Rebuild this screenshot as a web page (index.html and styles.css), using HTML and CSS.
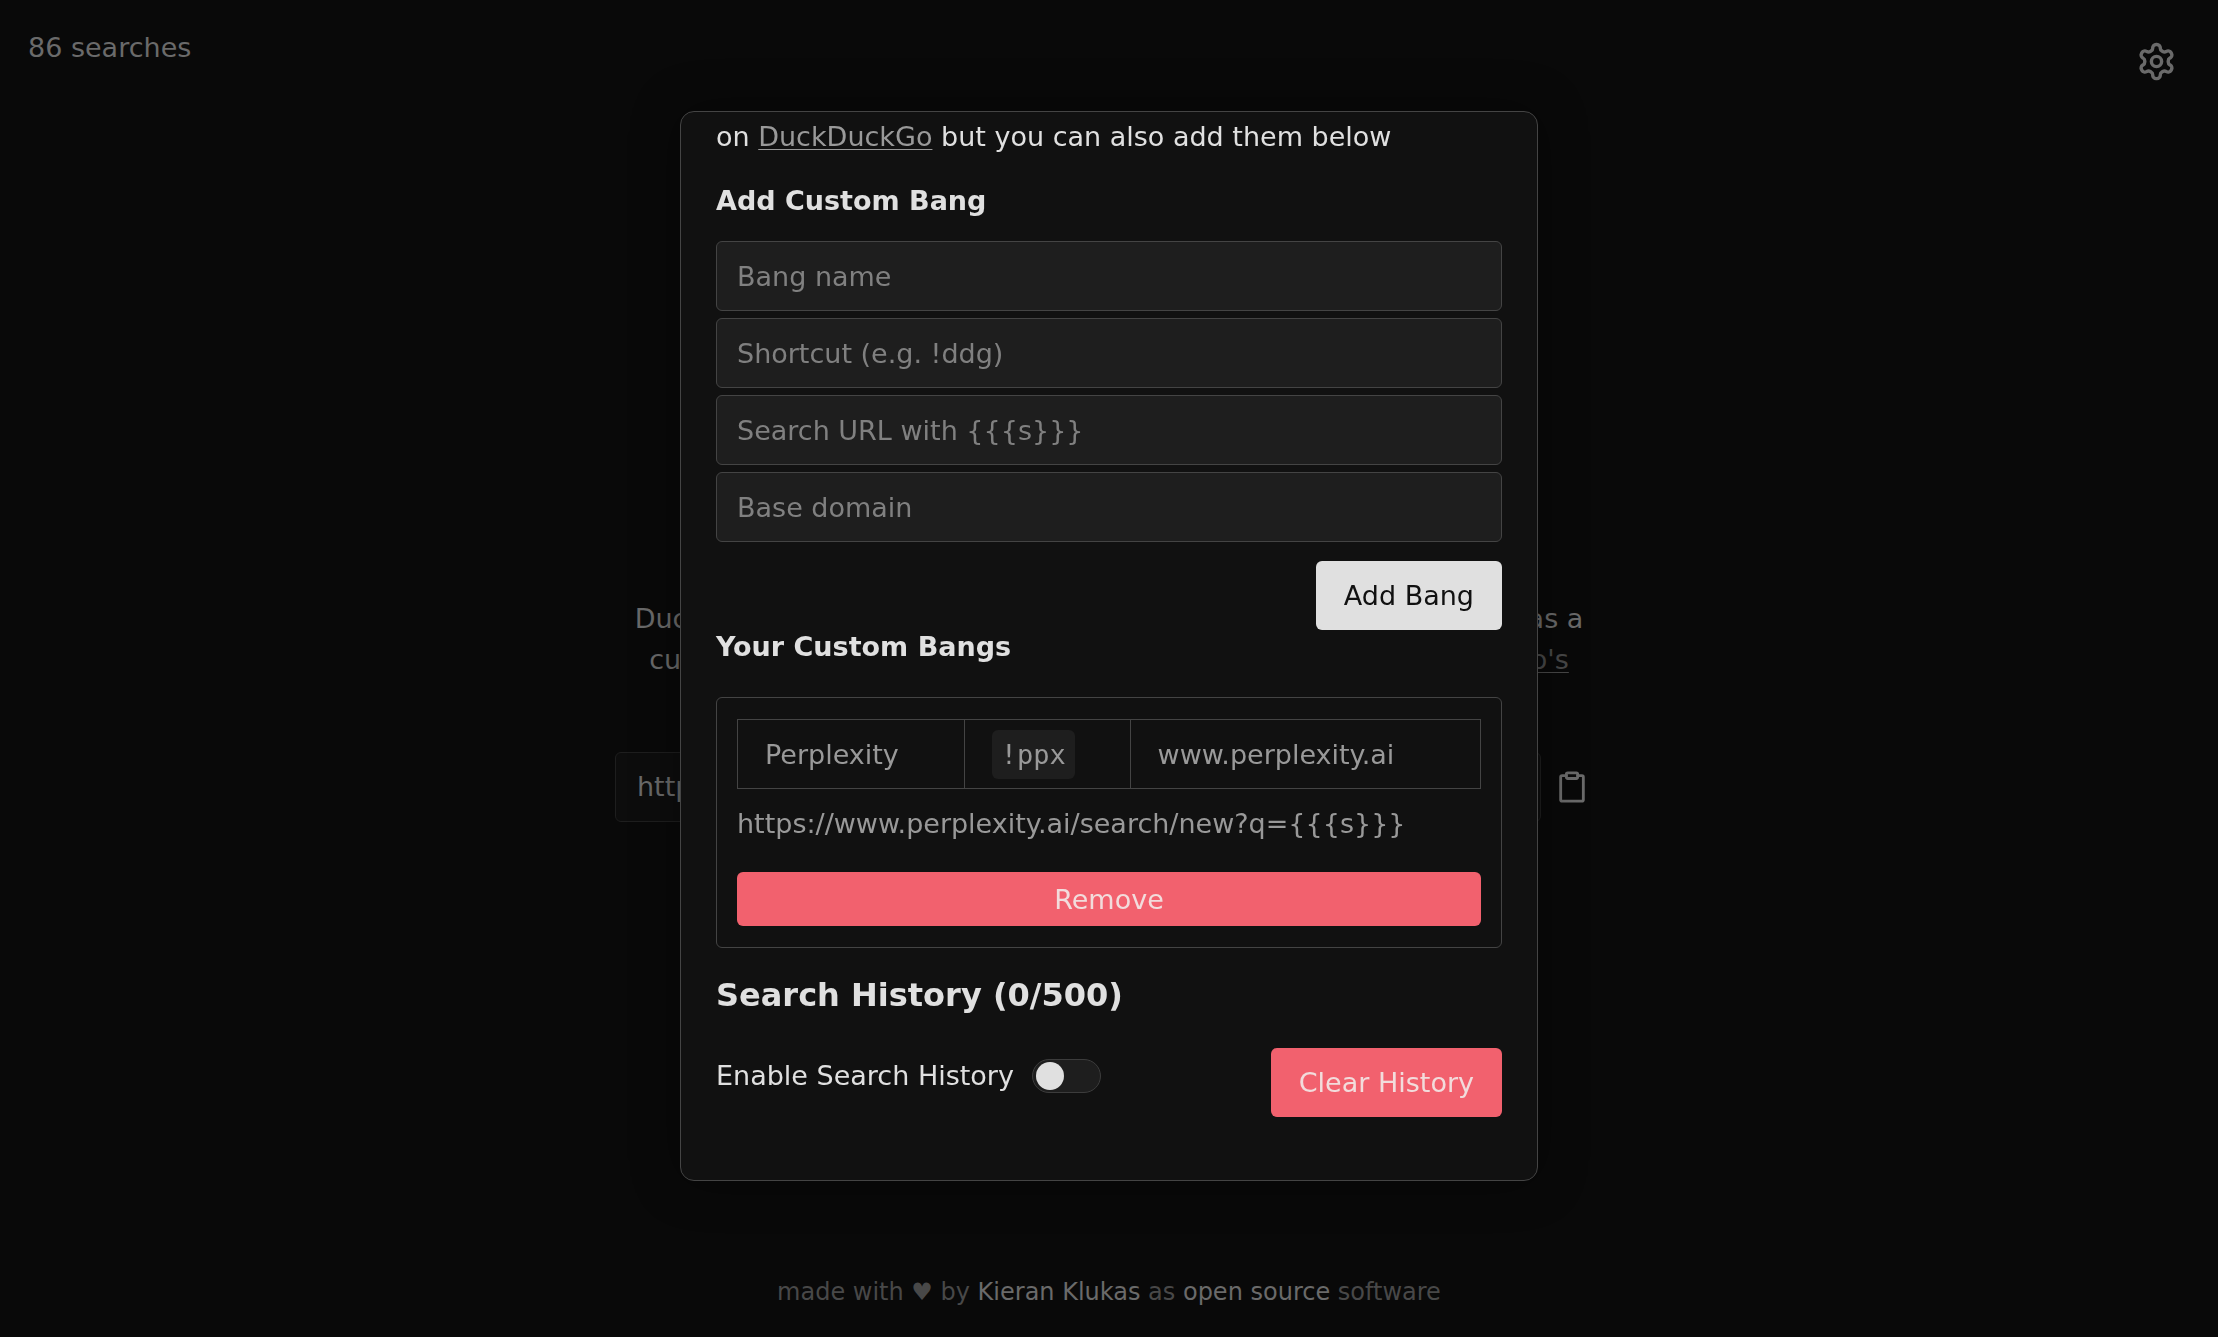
FILE: index.html
```html
<!DOCTYPE html>
<html lang="en">
<head>
<meta charset="utf-8">
<meta name="viewport" content="width=device-width, initial-scale=1">
<title>Bang settings</title>
<link rel="stylesheet" href="styles.css">
</head>
<body>
<div class="page">
  <header class="topbar">
    <span class="count">86 searches</span>
    <button class="icon-button" type="button" aria-label="Settings">
      <svg class="gear" viewBox="0 0 24 24" aria-hidden="true"><path d="M12.22 2h-.44a2 2 0 0 0-2 2v.18a2 2 0 0 1-1 1.73l-.43.25a2 2 0 0 1-2 0l-.15-.08a2 2 0 0 0-2.73.73l-.22.38a2 2 0 0 0 .73 2.73l.15.1a2 2 0 0 1 1 1.72v.51a2 2 0 0 1-1 1.74l-.15.09a2 2 0 0 0-.73 2.73l.22.38a2 2 0 0 0 2.73.73l.15-.08a2 2 0 0 1 2 0l.43.25a2 2 0 0 1 1 1.73V20a2 2 0 0 0 2 2h.44a2 2 0 0 0 2-2v-.18a2 2 0 0 1 1-1.73l.43-.25a2 2 0 0 1 2 0l.15.08a2 2 0 0 0 2.73-.73l.22-.39a2 2 0 0 0-.73-2.73l-.15-.08a2 2 0 0 1-1-1.74v-.5a2 2 0 0 1 1-1.74l.15-.09a2 2 0 0 0 .73-2.73l-.22-.38a2 2 0 0 0-2.73-.73l-.15.08a2 2 0 0 1-2 0l-.43-.25a2 2 0 0 1-1-1.73V4a2 2 0 0 0-2-2z"/><circle cx="12" cy="12" r="3"/></svg>
    </button>
  </header>
  <main class="intro">
    <p class="intro-text">DuckDuckGo's bang redirects are too slow. Add the following URL as a custom search engine to your browser. Enables all of <a class="dim-link" href="#bangs">DuckDuckGo's bangs.</a></p>
    <div class="url-row">
      <input class="url-input" type="text" value="https://" aria-label="Search engine URL" readonly>
      <button class="icon-button" type="button" aria-label="Copy URL">
        <svg class="clipboard" viewBox="0 0 24 24" aria-hidden="true"><path d="M16 4h3a1 1 0 0 1 1 1v16a1 1 0 0 1-1 1H5a1 1 0 0 1-1-1V5a1 1 0 0 1 1-1h3"/><rect x="8" y="2" width="8" height="4" rx="1"/></svg>
      </button>
    </div>
  </main>
  <footer class="footer">made with ♥ by <a href="#author">Kieran Klukas</a> as <a href="#source">open source</a> software</footer>
</div>

<div class="overlay">
  <section class="modal" role="dialog" aria-label="Settings">
    <p class="lead">on <a class="modal-link" href="#duckduckgo">DuckDuckGo</a> but you can also add them below</p>
    <h3 class="subheading">Add Custom Bang</h3>
    <form class="bang-form">
      <input class="field" type="text" placeholder="Bang name" aria-label="Bang name">
      <input class="field" type="text" placeholder="Shortcut (e.g. !ddg)" aria-label="Shortcut">
      <input class="field" type="text" placeholder="Search URL with {{{s}}}" aria-label="Search URL">
      <input class="field" type="text" placeholder="Base domain" aria-label="Base domain">
      <button class="button" type="button">Add Bang</button>
    </form>
    <h3 class="subheading subheading-list">Your Custom Bangs</h3>
    <article class="bang">
      <table class="bang-table">
        <tbody>
          <tr><td>Perplexity</td><td><code>!ppx</code></td><td>www.perplexity.ai</td></tr>
        </tbody>
      </table>
      <p class="bang-url">https://www.perplexity.ai/search/new?q={{{s}}}</p>
      <button class="button button-danger button-slim" type="button">Remove</button>
    </article>
    <h2 class="heading">Search History (0/500)</h2>
    <div class="history">
      <label class="toggle-label">Enable Search History
        <input class="toggle" type="checkbox">
      </label>
      <button class="button button-danger" type="button">Clear History</button>
    </div>
  </section>
</div>
</body>
</html>
```
FILE: styles.css
```css
*, *::before, *::after { box-sizing: border-box; }

body {
  margin: 0;
  background: #090909;
  color: #6a6a6a;
  font: 27px/41px "DejaVu Sans", sans-serif;
}

p, h2, h3 { margin: 0; }

button, input { font: inherit; }

.page {
  display: grid;
  grid-template-rows: auto 1fr auto;
  min-height: 100vh;
}

.topbar {
  display: flex;
  justify-content: space-between;
  align-items: flex-start;
  padding: 27px 27px 27px 28px;
}

.icon-button {
  display: flex;
  padding: 14px;
  border: 0;
  background: none;
  color: #6a6a6a;
}

.icon-button svg {
  fill: none;
  stroke: currentColor;
  stroke-width: 2;
  stroke-linecap: round;
  stroke-linejoin: round;
}

.gear { width: 41px; height: 41px; }
.clipboard { width: 34px; height: 34px; }

.intro {
  align-self: center;
  width: 100%;
  max-width: 988px;
  margin: 0 auto;
  padding-top: 22px;
}

.intro-text { text-align: center; }
.dim-link { color: #484848; text-underline-offset: 3px; text-decoration-thickness: 1px; }

.url-row {
  display: flex;
  align-items: center;
  margin-top: 31px;
}

.url-input {
  flex: 1;
  height: 70px;
  padding: 0 21px;
  border: 1px solid #1e1e1e;
  border-radius: 6px;
  background: #0d0d0d;
  color: #6a6a6a;
}

.footer {
  padding: 0 27px 27px;
  color: #484848;
  font-size: 24px;
  line-height: 36px;
  text-align: center;
}

.footer a { color: #6a6a6a; text-decoration: none; }

.overlay {
  position: fixed;
  inset: 0;
  display: flex;
  justify-content: center;
  align-items: flex-start;
  padding-top: 111px;
}

.modal {
  width: 100%;
  max-width: 858px;
  height: 80vh;
  overflow: hidden;
  padding: 4px 35px 36px;
  border: 1px solid #444;
  border-radius: 14px;
  background: #111;
  box-shadow: 0 0 48px rgba(0, 0, 0, 0.4);
  color: #e0e0e0;
}

.modal-link { color: #999; text-underline-offset: 3px; text-decoration-thickness: 1px; }

.subheading {
  margin: 28px 0 24px;
  font-size: 27px;
  line-height: 32px;
}

.subheading-list { margin: 1px 0 34px; }

.bang-form {
  display: flex;
  flex-direction: column;
  gap: 7px;
}

.field {
  width: 100%;
  height: 70px;
  padding: 0 20px;
  border: 1px solid #444;
  border-radius: 6px;
  background: #1e1e1e;
  color: #e0e0e0;
}

.field::placeholder { color: #808080; opacity: 1; }

.button {
  height: 69px;
  padding: 0 28px;
  border: 0;
  border-radius: 6px;
  background: #e0e0e0;
  color: #111;
}

.bang-form .button { align-self: flex-end; margin-top: 12px; }

.button-danger { background: #f2616e; color: #f2dcdc; }
.button-slim { width: 100%; height: 54px; }

.bang {
  padding: 21px 20px;
  border: 1px solid #444;
  border-radius: 6px;
  color: #999;
}

.bang-table {
  width: 100%;
  height: 70px;
  border-collapse: collapse;
}

.bang-table td {
  padding: 0 27px;
  border: 1px solid #444;
}

.bang-table code {
  padding: 9px;
  border-radius: 6px;
  background: #1e1e1e;
  font: 27px/32px "DejaVu Sans Mono", monospace;
}

.bang-url { margin: 14px 0 28px; }

.bang .button { display: block; }

.heading {
  margin: 27px 0 33px;
  font-size: 32px;
  line-height: 40px;
}

.history {
  display: flex;
  justify-content: space-between;
  align-items: flex-start;
}

.toggle-label {
  display: flex;
  align-items: center;
  gap: 18px;
  height: 55px;
}

.toggle {
  display: flex;
  align-items: center;
  appearance: none;
  width: 69px;
  height: 34px;
  margin: 0;
  padding: 0 3px;
  border: 1px solid #3c3c3c;
  border-radius: 17px;
  background: #1e1e1e;
}

.toggle::before {
  content: "";
  width: 28px;
  height: 28px;
  border-radius: 50%;
  background: #e0e0e0;
}

.toggle:checked { justify-content: flex-end; }
```
